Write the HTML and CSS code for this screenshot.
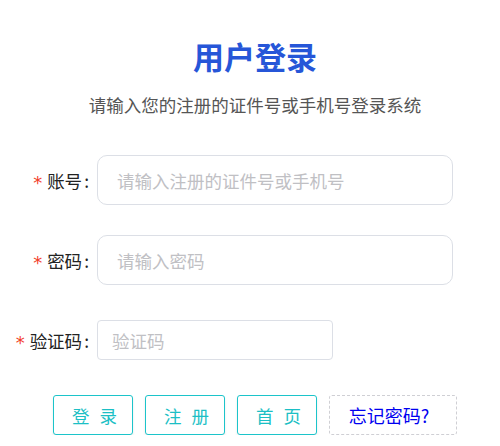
FILE: index.html
```html
<!DOCTYPE html>
<html lang="zh-CN">
<head>
<meta charset="utf-8">
<title>用户登录</title>
<link rel="stylesheet" href="styles.css">
</head>
<body>
<div class="page">
  <h1 class="title">用户登录</h1>
  <p class="subtitle">请输入您的注册的证件号或手机号登录系统</p>
  <form class="form">
    <div class="row row-account">
      <label class="label"><span class="req">*</span>账号<span class="colon">:</span></label>
      <input class="input input-lg" type="text" placeholder="请输入注册的证件号或手机号">
    </div>
    <div class="row row-password">
      <label class="label"><span class="req">*</span>密码<span class="colon">:</span></label>
      <input class="input input-lg" type="password" placeholder="请输入密码">
    </div>
    <div class="row row-code">
      <label class="label"><span class="req">*</span>验证码<span class="colon">:</span></label>
      <input class="input input-sm" type="text" placeholder="验证码">
    </div>
    <div class="actions">
      <button type="button" class="btn btn-teal">登 录</button>
      <button type="button" class="btn btn-teal">注 册</button>
      <button type="button" class="btn btn-teal">首 页</button>
      <button type="button" class="btn btn-link">忘记密码?</button>
    </div>
  </form>
</div>
</body>
</html>
```
FILE: styles.css
```css
* { box-sizing: border-box; }
html, body { margin: 0; padding: 0; background: #fff; }
body {
  font-family: "Noto Sans CJK SC", "Noto Sans", sans-serif;
  color: #333;
}
.page {
  width: 500px;
  padding-top: 36px;
}
.title {
  margin: 0;
  padding-left: 10px;
  text-align: center;
  font-size: 31px;
  line-height: 40px;
  font-weight: 700;
  color: #2656d8;
}
.subtitle {
  margin: 17px 0 0;
  padding-left: 10px;
  text-align: center;
  font-size: 17.5px;
  line-height: 24px;
  color: #555;
}
.form {
  margin-top: 38px;
  display: flex;
  flex-direction: column;
}
.row {
  display: flex;
  align-items: center;
  gap: 7px;
}
.row-password { margin-top: 30px; }
.row-code { margin-top: 35px; }
.label {
  width: 90px;
  text-align: right;
  font-size: 17.5px;
  color: #222;
  white-space: nowrap;
}
.colon {
  margin-left: 2px;
  margin-right: 1px;
}
.req {
  display: inline-block;
  color: #f2402a;
  font-family: "DejaVu Sans", sans-serif;
  font-size: 18px;
  line-height: 1;
  margin-right: 5px;
  position: relative;
  top: 1px;
}
.input {
  font-family: "Noto Sans CJK SC", sans-serif;
  font-size: 17.5px;
  color: #333;
  border: 1px solid #dcdfe6;
  background: #fff;
  outline: none;
}
.input::placeholder { color: #c0c0c4; }
.input-lg {
  width: 356px;
  height: 50px;
  border-radius: 10px;
  padding: 0 19px;
}
.input-sm {
  width: 236px;
  height: 40px;
  border-radius: 4px;
  padding: 0 14px;
}
.actions {
  margin-top: 35px;
  padding-left: 53px;
  display: flex;
  gap: 12px;
}
.btn {
  height: 40px;
  font-family: "Noto Sans CJK SC", sans-serif;
  font-size: 17.5px;
  background: #fff;
  cursor: pointer;
  padding: 0;
}
.btn-teal {
  width: 80px;
  border: 1px solid #1cc4ca;
  border-radius: 3px;
  color: #1cbfc5;
  letter-spacing: 3px;
  padding-left: 6px;
  box-shadow: 0 2px 3px rgba(0, 0, 0, 0.08);
}
.btn-link {
  width: 128px;
  border: 1px dashed #cfcfd4;
  border-radius: 3px;
  color: #0000f0;
  font-size: 18px;
  padding-right: 8px;
}
```
